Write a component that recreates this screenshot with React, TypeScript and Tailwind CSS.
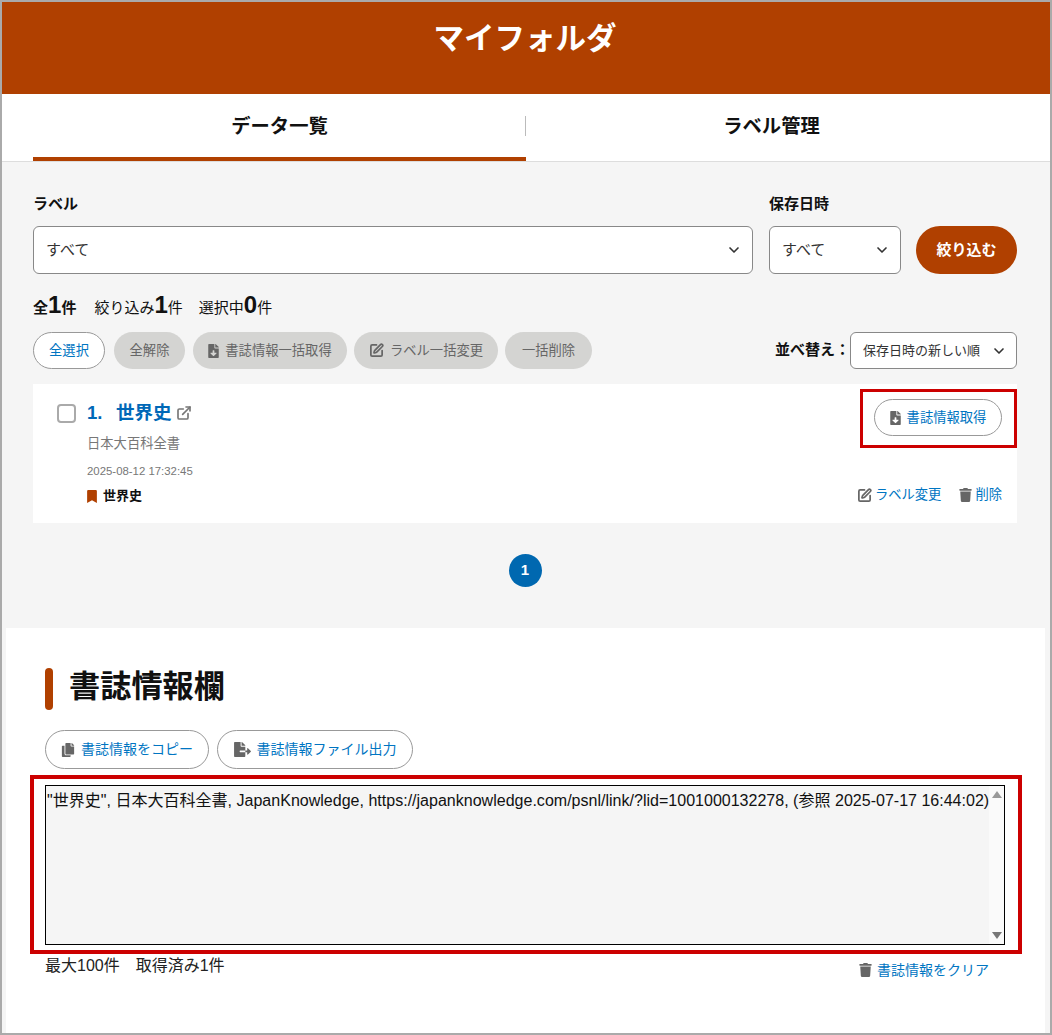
import { ChevronDown, ExternalLink, SquarePen } from "lucide-react";
import { FaBookmark, FaCopy, FaFileDownload, FaFileExport, FaTrash } from "react-icons/fa";

const Chevron = () => <ChevronDown className="h-4 w-4 text-[#333]" strokeWidth={2.5} />;

const GrayButton = ({ children, className }: { children: React.ReactNode; className: string }) => (
  <span className={`flex h-[37px] items-center justify-center gap-1.5 rounded-full bg-[#d4d4d2] text-[13.3px] text-[#666] ${className}`}>
    {children}
  </span>
);

const App = () => {
  return (
    <div className="box-border h-[1035px] w-[1052px] overflow-hidden border-2 border-[#aaaaaa] bg-[#f5f5f5] font-['Liberation_Sans','Noto_Sans_CJK_JP',sans-serif] text-[#111]">
      <header className="flex h-[92px] items-center justify-center bg-[#b04000] pb-[19px] pr-[2px] text-[30.5px] font-bold text-white">
        マイフォルダ
      </header>

      <nav className="flex h-[68px] border-b border-[#dddddd] bg-white pl-[31px] pr-[33px]">
        <div className="flex w-[493px] items-center justify-center border-b-4 border-[#b04000] pt-[4px] text-[19.3px] font-bold">
          データ一覧
        </div>
        <div className="relative flex flex-1 items-center justify-center text-[19.3px] font-bold">
          <span className="absolute -left-px top-[22px] h-5 w-px bg-[#bbbbbb]" />
          ラベル管理
        </div>
      </nav>

      <section className="h-[466px] pl-[31px] pr-[33px] pt-[32px]">
        <div className="flex items-end">
          <div className="w-[720px]">
            <p className="mb-[12px] text-[15px] font-bold leading-[20px]">ラベル</p>
            <div className="flex h-12 items-center justify-between rounded-md border border-[#888888] bg-white pl-3 pr-[10px] text-[15px] text-[#333]">
              すべて
              <Chevron />
            </div>
          </div>
          <div className="ml-4 w-[132px]">
            <p className="mb-[12px] text-[15px] font-bold leading-[20px]">保存日時</p>
            <div className="flex h-12 items-center justify-between rounded-md border border-[#888888] bg-white pl-3 pr-[10px] text-[15px] text-[#333]">
              すべて
              <Chevron />
            </div>
          </div>
          <button className="ml-[15px] h-12 w-[101px] rounded-full bg-[#b04000] text-[15px] font-bold text-white">
            絞り込む
          </button>
        </div>

        <div className="mt-4 flex h-[32px] items-center gap-4 text-[15px]">
          <span className="mr-[2px] flex items-baseline font-bold">
            全<span className="text-[24px] leading-none">1</span>件
          </span>
          <span className="flex items-baseline">
            絞り込み<span className="text-[24px] font-bold leading-none">1</span>件
          </span>
          <span className="flex items-baseline">
            選択中<span className="text-[24px] font-bold leading-none">0</span>件
          </span>
        </div>

        <div className="mt-[10px] flex items-center">
          <span className="flex h-[37px] w-[72px] items-center justify-center rounded-full border border-[#999999] bg-white text-[13.3px] text-[#0075c2]">
            全選択
          </span>
          <GrayButton className="ml-[9px] w-[71px]">全解除</GrayButton>
          <GrayButton className="ml-2 w-[154px]">
            <FaFileDownload className="h-[14px] w-[11px] text-[#666]" />
            書誌情報一括取得
          </GrayButton>
          <GrayButton className="ml-[7px] w-[144px]">
            <SquarePen className="h-[15px] w-[15px] text-[#666]" strokeWidth={2.75} />
            ラベル一括変更
          </GrayButton>
          <GrayButton className="ml-[7px] w-[87px]">一括削除</GrayButton>
          <span className="ml-auto text-[15px] font-bold">並べ替え：</span>
          <div className="flex h-[37px] w-[167px] items-center justify-between rounded-md border border-[#888888] bg-white pl-3 pr-[9px] text-[13px] text-[#333]">
            保存日時の新しい順
            <Chevron />
          </div>
        </div>

        <article className="relative mt-[15px] flex h-[139px] bg-white pl-6 pr-[15px]">
          <span className="mt-5 box-border h-[19px] w-[19px] rounded border-2 border-[#aaaaaa] bg-white" />
          <div className="ml-[11px] flex-1 pt-[17px]">
            <h3 className="flex h-6 items-center text-[#0068b7]">
              <span className="w-[29px] text-[18.5px] font-bold">1.</span>
              <span className="text-[18.5px] font-bold">世界史</span>
              <ExternalLink className="ml-[4px] h-4 w-4 text-[#777]" strokeWidth={2.5} />
            </h3>
            <p className="mt-[9px] text-[13.3px] leading-[20px] text-[#777]">日本大百科全書</p>
            <p className="mt-[8px] text-[11.4px] leading-[18px] text-[#777]">2025-08-12 17:32:45</p>
            <p className="mt-[7px] flex items-center gap-[6px] text-[13px] font-bold leading-[18px]">
              <FaBookmark className="h-[13px] w-[10px] text-[#b04000]" />
              世界史
            </p>
          </div>
          <div className="flex flex-col items-end justify-between pb-[18px] pt-[15px]">
            <span className="flex h-[37px] w-[128px] items-center justify-center gap-[6px] rounded-full border border-[#999999] bg-white text-[13.3px] text-[#0075c2]">
              <FaFileDownload className="h-[14px] w-[11px] text-[#666]" />
              書誌情報取得
            </span>
            <div className="flex items-center text-[13.3px] leading-[20px] text-[#0075c2]">
              <SquarePen className="mr-[3px] h-[15px] w-[15px] text-[#666]" strokeWidth={2.75} />
              ラベル変更
              <FaTrash className="ml-[18px] mr-[3px] h-[14px] w-[13px] text-[#666]" />
              削除
            </div>
          </div>
          <div className="absolute right-0 top-[5px] h-[59px] w-[157px] border-[3px] border-[#cc0000]" />
        </article>

        <div className="mt-[31px] flex justify-center">
          <span className="flex h-[33px] w-[33px] items-center justify-center rounded-full bg-[#0068b0] text-[15px] font-bold text-white">
            1
          </span>
        </div>
      </section>

      <section className="relative ml-[4px] mr-[5px] h-[405px] bg-white pl-[39px] pr-[40px] pt-[40px]">
        <h2 className="flex h-[42px] items-center gap-4">
          <span className="h-[42px] w-2 rounded-full bg-[#b04000]" />
          <span className="mb-[4px] text-[31.2px] font-bold leading-none">書誌情報欄</span>
        </h2>

        <div className="mt-5 flex gap-2">
          <span className="flex h-[39px] w-[164px] items-center justify-center gap-[6px] rounded-full border border-[#999999] text-[14px] text-[#0075c2]">
            <FaCopy className="h-[14px] w-[14px] text-[#666]" />
            書誌情報をコピー
          </span>
          <span className="flex h-[39px] w-[196px] items-center justify-center gap-[6px] rounded-full border border-[#999999] text-[14px] text-[#0075c2]">
            <FaFileExport className="h-[15px] w-[17px] text-[#666]" />
            書誌情報ファイル出力
          </span>
        </div>

        <div className="mt-4 flex h-40 border border-black bg-[#f5f5f5]">
          <p className="flex-1 whitespace-nowrap pl-[1px] pt-[3px] text-[16.05px] leading-[22px] text-[#111]">
            "世界史", 日本大百科全書, JapanKnowledge, https://japanknowledge.com/psnl/link/?lid=1001000132278, (参照 2025-07-17 16:44:02)
          </p>
          <div className="flex w-[15px] flex-col items-center justify-between bg-[#fafafa] py-[5px]">
            <span className="h-0 w-0 border-x-[5px] border-b-[7px] border-x-transparent border-b-[#999999]" />
            <span className="h-0 w-0 border-x-[5px] border-t-[7px] border-x-transparent border-t-[#777777]" />
          </div>
        </div>

        <div className="mt-[10px] flex items-start justify-between">
          <p className="text-[16px] leading-[22px] text-[#222]">最大100件　取得済み1件</p>
          <div className="mr-[16px] mt-[5px] flex items-center gap-[5px] text-[14px] leading-[20px] text-[#0075c2]">
            <FaTrash className="h-[14px] w-[13px] text-[#666]" />
            書誌情報をクリア
          </div>
        </div>

        <div className="absolute left-[24px] top-[147px] h-[179px] w-[992px] border-4 border-[#cc0000]" />
      </section>
    </div>
  );
};

export default App;
